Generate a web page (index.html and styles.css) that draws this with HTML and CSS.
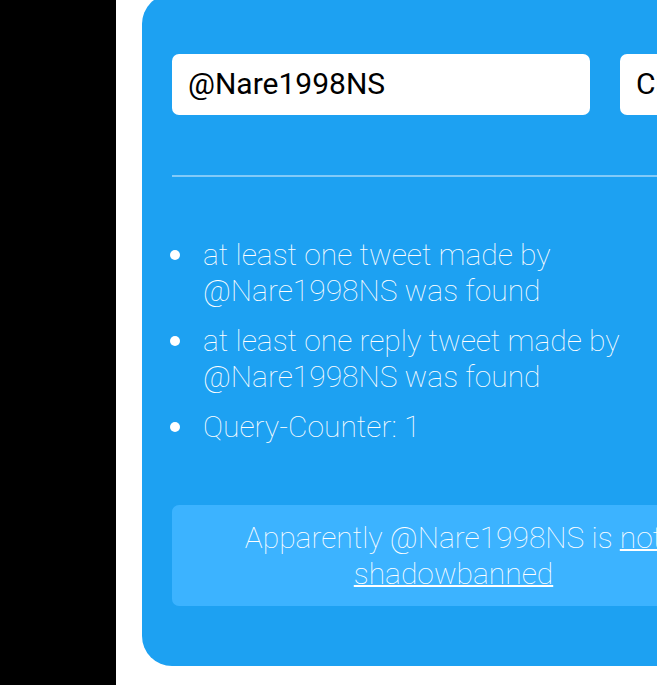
FILE: index.html
```html
<!DOCTYPE html>
<html lang="en">
<head>
<meta charset="utf-8">
<meta name="viewport" content="width=device-width, initial-scale=1">
<title>Shadowban test</title>
<link rel="stylesheet" href="styles.css">
</head>
<body>
<main class="page">
  <section class="card">
    <form class="search">
      <input class="field" type="text" aria-label="Username" value="@Nare1998NS">
      <button class="check" type="button">Check</button>
    </form>
    <ul class="results">
      <li>at least one tweet made by @Nare1998NS was found</li>
      <li>at least one reply tweet made by @Nare1998NS was found</li>
      <li>Query-Counter: 1</li>
    </ul>
    <p class="verdict">Apparently @Nare1998NS is <a href="#">not shadowbanned</a></p>
  </section>
</main>
</body>
</html>
```
FILE: styles.css
```css
* {
  box-sizing: border-box;
}

body {
  margin: 0;
  min-height: 100vh;
  overflow: hidden;
  background: #000;
  font-family: Roboto, sans-serif;
  font-size: 30px;
  font-weight: 100;
  line-height: 36px;
}

.page {
  display: flow-root;
  min-height: 100vh;
  margin-left: 116px;
  padding-left: 26px;
  background: #fff;
}

/* The card continues past the right edge of the window. */
.card {
  margin-top: -6px;
  margin-right: -108px;
  padding: 60px 30px;
  border-radius: 30px;
  background: #1da1f2;
  color: #fff;
}

.search {
  display: flex;
  gap: 30px;
  padding-bottom: 60px;
  border-bottom: 2px solid #82caf8;
}

.field,
.check {
  height: 61px;
  padding: 0 16px 2px;
  border: 0;
  border-radius: 7px;
  background: #fff;
  color: #000;
  font: 400 30px Roboto, sans-serif;
}

.field {
  flex: 1;
  min-width: 0;
}

.check {
  width: 115px;
  text-align: left;
}

.results {
  margin: 60px 0;
  padding: 0;
  list-style: none;
}

.results li {
  position: relative;
  margin-bottom: 14px;
  padding: 0 70px 0 31px;
}

.results li::before {
  content: "";
  position: absolute;
  top: 13px;
  left: -2px;
  width: 10px;
  height: 10px;
  border-radius: 50%;
  background: #fff;
}

.verdict {
  margin: 0;
  padding: 15px 60px 14px;
  border-radius: 7px;
  background: #3cb3ff;
  text-align: center;
}

.verdict a {
  color: inherit;
  text-decoration-thickness: 2px;
}
```
